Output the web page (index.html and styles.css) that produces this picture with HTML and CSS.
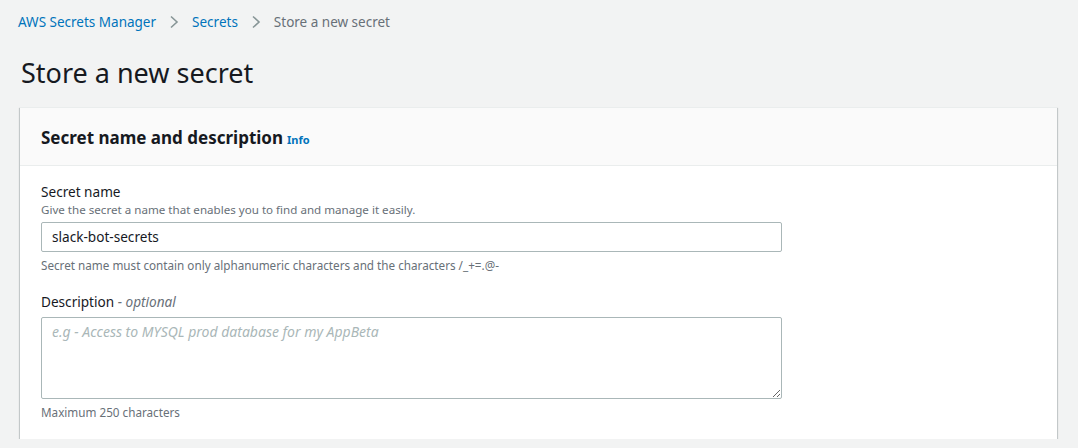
FILE: index.html
```html
<!DOCTYPE html>
<html>
<head>
<meta charset="utf-8">
<link rel="stylesheet" href="styles.css">
</head>
<body>
<div class="page">
  <nav class="crumbs">
    <a class="crumb-link">AWS Secrets Manager</a>
    <svg class="chev" width="10" height="14" viewBox="0 0 10 14"><path d="M2 1.5 L8 7 L2 12.5" fill="none" stroke="#879596" stroke-width="1.6"/></svg>
    <a class="crumb-link">Secrets</a>
    <svg class="chev" width="10" height="14" viewBox="0 0 10 14"><path d="M2 1.5 L8 7 L2 12.5" fill="none" stroke="#879596" stroke-width="1.6"/></svg>
    <span class="crumb-current">Store a new secret</span>
  </nav>
  <h1 class="title">Store a new secret</h1>
  <section class="card">
    <header class="card-head">
      <h2 class="card-title">Secret name and description</h2>
      <span class="info">Info</span>
    </header>
    <div class="card-body">
      <div class="field">
        <div class="label">Secret name</div>
        <div class="desc">Give the secret a name that enables you to find and manage it easily.</div>
        <div class="input">slack-bot-secrets</div>
        <div class="hint">Secret name must contain only alphanumeric characters and the characters /_+=.@-</div>
      </div>
      <div class="field field2">
        <div class="label">Description <span class="opt">- optional</span></div>
        <textarea class="textarea" placeholder="e.g - Access to MYSQL prod database for my AppBeta"></textarea>
        <div class="hint">Maximum 250 characters</div>
      </div>
    </div>
  </section>
</div>
</body>
</html>
```

FILE: styles.css
```css
* { box-sizing: border-box; }
html, body {
  margin: 0;
  padding: 0;
  background: #f2f3f3;
  font-family: "Noto Sans", "Open Sans", sans-serif;
  color: #16191f;
}
.page {
  padding: 12px 22px 0 20px;
}
.crumbs {
  display: flex;
  align-items: center;
  gap: 10px;
  height: 20px;
  font-size: 13.5px;
  margin-left: -2px;
}
.crumb-link { color: #0073bb; }
.crumb-current { color: #687078; }
.chev { display: block; margin: 0 3px; }
.title {
  margin: 24px 0 0 1px;
  font-size: 27px;
  font-weight: 400;
  line-height: 34px;
  color: #16191f;
}
.card {
  margin-top: 17px;
  width: 1037px;
  background: #fff;
  box-shadow: 0 1px 1px 0 rgba(0,28,36,0.3), 1px 1px 1px 0 rgba(0,28,36,0.15), -1px 1px 1px 0 rgba(0,28,36,0.15);
  border-top: 1px solid #eaeded;
}
.card-head {
  display: flex;
  align-items: baseline;
  gap: 4px;
  background: #fafafa;
  border-bottom: 1px solid #eaeded;
  padding: 17px 20px 0 21px;
  height: 58px;
}
.card-title {
  margin: 0;
  font-size: 17px;
  font-weight: 700;
  line-height: 26px;
}
.info {
  font-size: 11px;
  font-weight: 700;
  color: #0073bb;
}
.card-body {
  padding: 16px 20px 19px 21px;
}
.label {
  font-size: 13.6px;
  line-height: 20px;
}
.opt {
  font-style: italic;
  color: #687078;
}
.desc {
  font-size: 11.6px;
  line-height: 16px;
  color: #687078;
}
.input {
  margin-top: 4px;
  width: 741px;
  height: 30px;
  border: 1px solid #aab7b8;
  border-radius: 2px;
  padding: 5px 10px;
  font-size: 13.6px;
  line-height: 18px;
}
.hint {
  margin-top: 5px;
  font-size: 11.7px;
  line-height: 16px;
  color: #687078;
}
.field2 { margin-top: 19px; }
.textarea {
  display: block;
  margin-top: 5px;
  width: 741px;
  height: 82px;
  border: 1px solid #aab7b8;
  border-radius: 2px;
  padding: 4px 10px;
  font-family: inherit;
  font-size: 14px;
  color: #16191f;
  resize: vertical;
}
.textarea::placeholder {
  color: #aab7b8;
  font-style: italic;
}
```
